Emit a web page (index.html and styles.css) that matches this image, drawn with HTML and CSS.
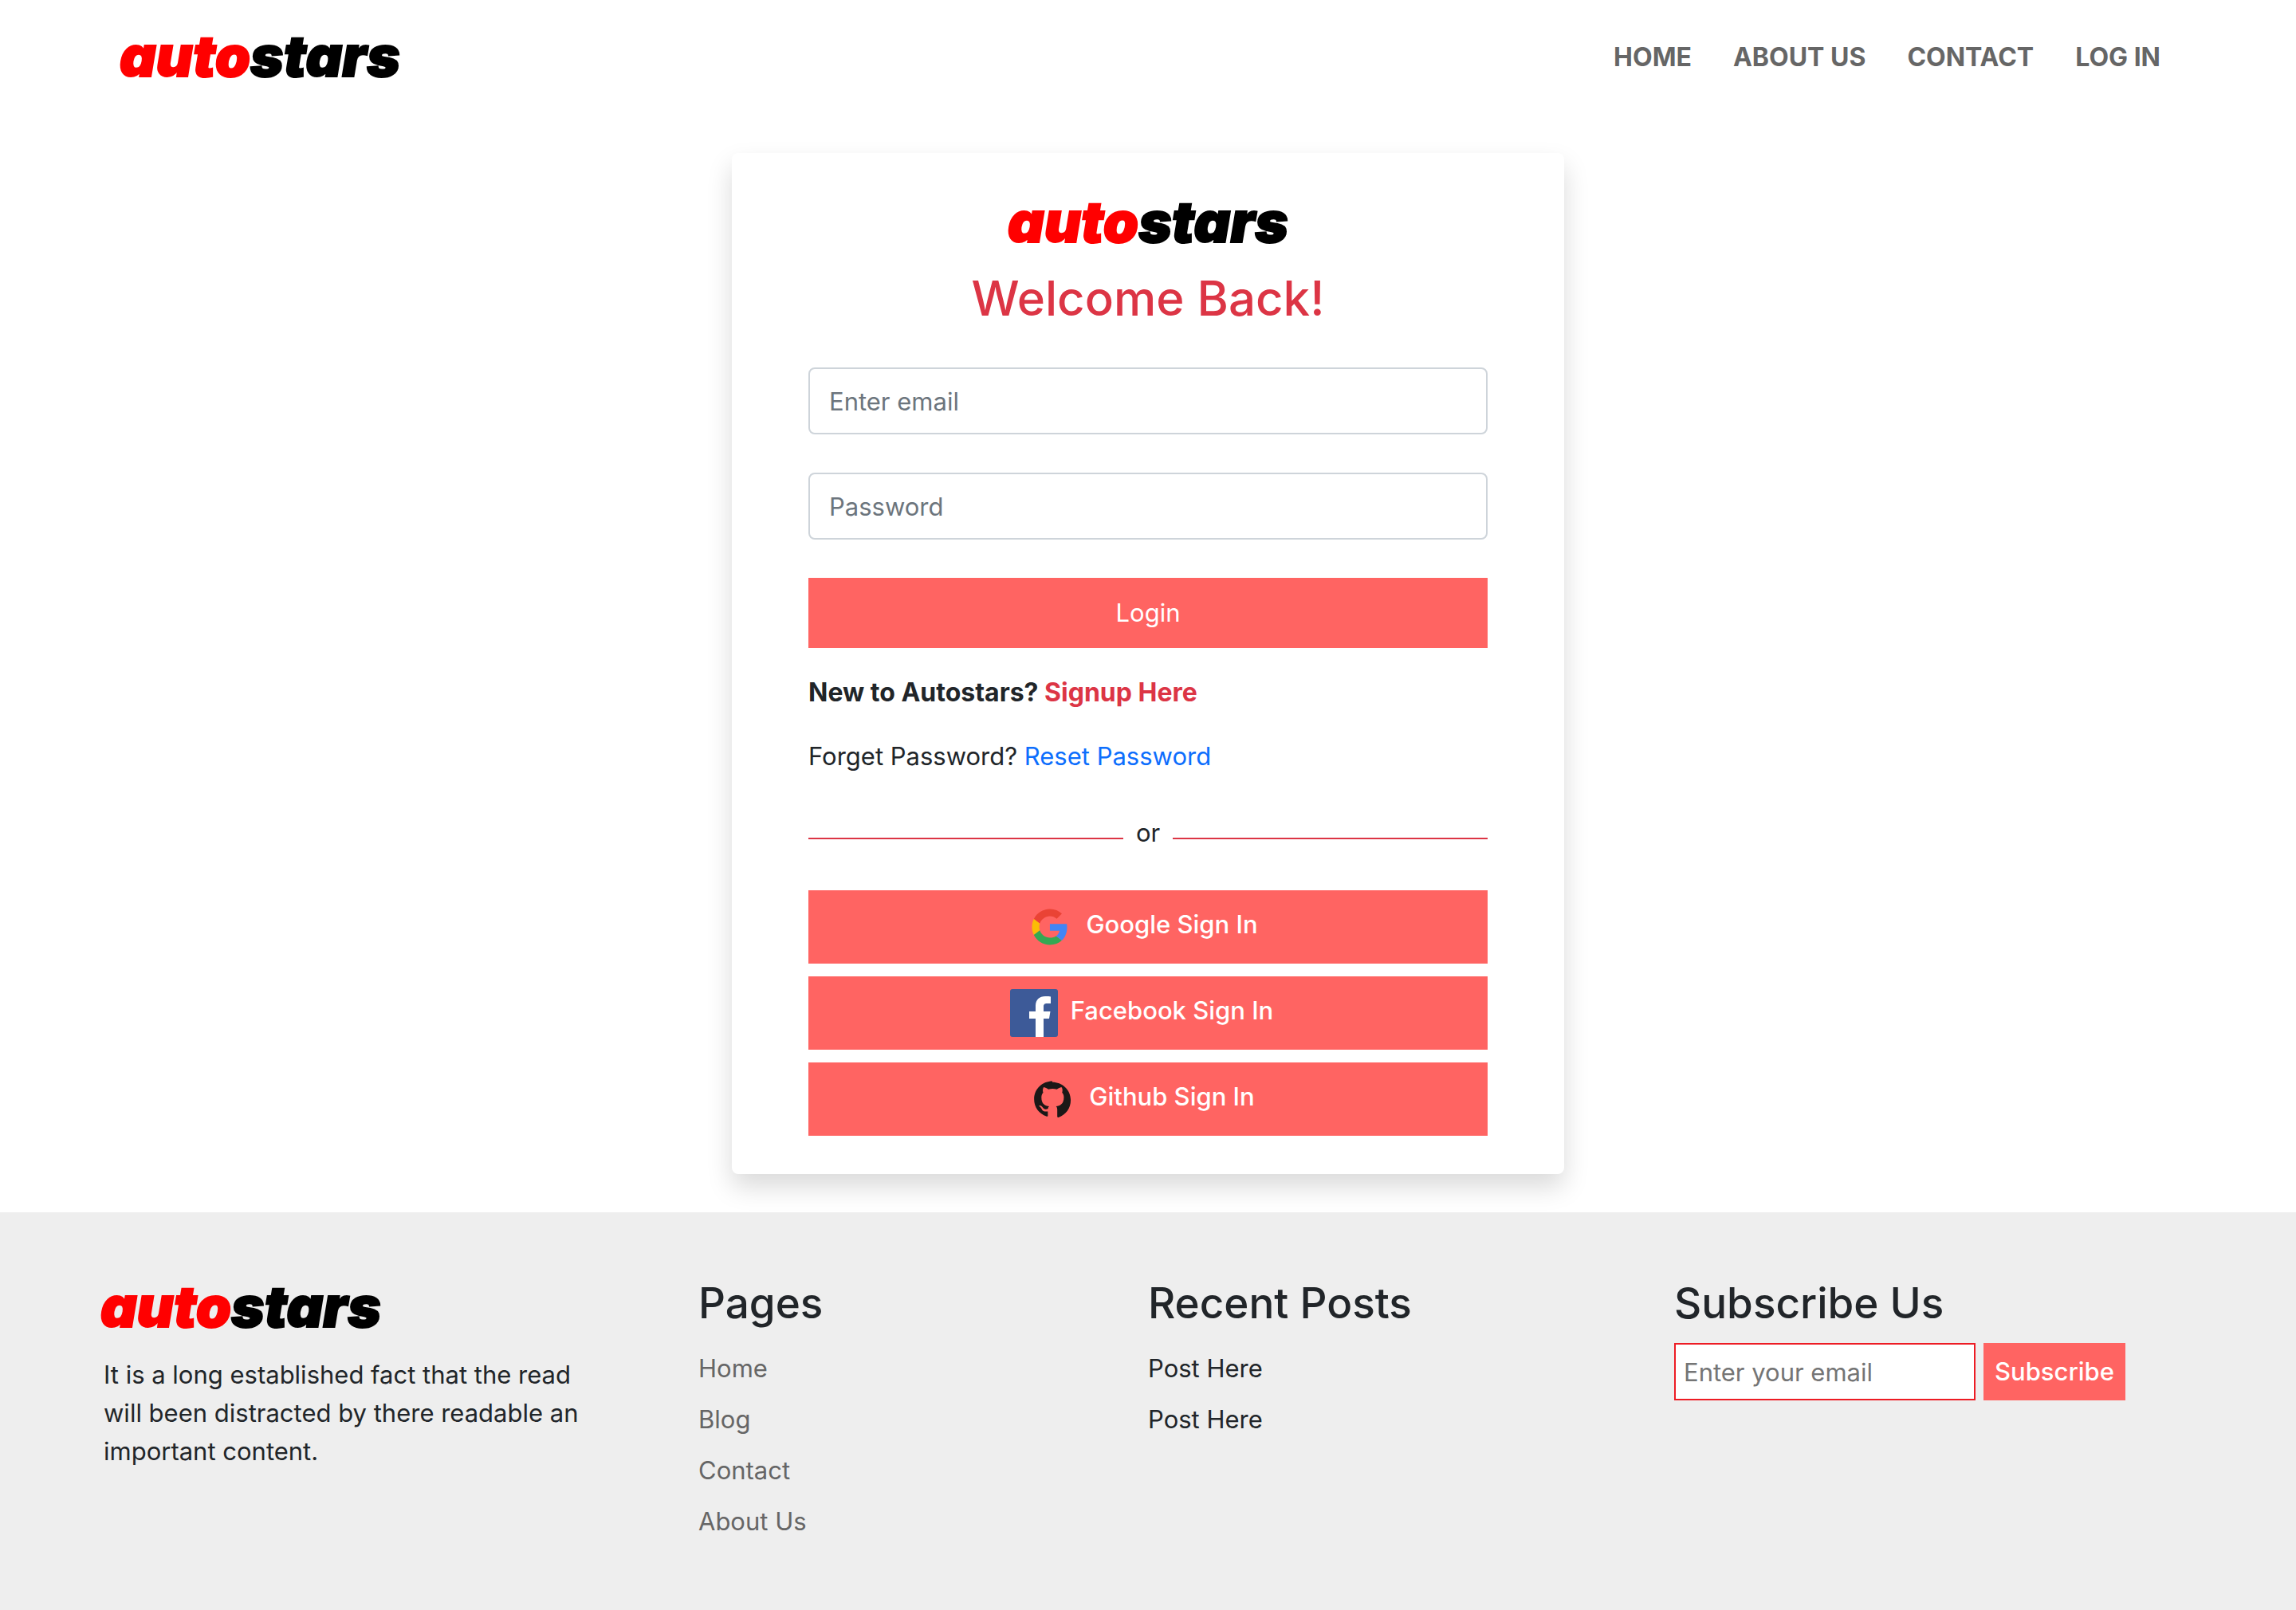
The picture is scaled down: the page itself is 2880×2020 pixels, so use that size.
FILE: index.html
```html
<!DOCTYPE html>
<html lang="en">
<head>
  <meta charset="utf-8">
  <meta name="viewport" content="width=device-width, initial-scale=1">
  <title>Autostars - Log in</title>
  <link rel="stylesheet" href="styles.css">
</head>
<body>
  <header class="site-header">
    <a class="logo" href="#"><span class="logo-auto">auto</span>stars</a>
    <nav class="site-nav">
      <a href="#">HOME</a>
      <a href="#">ABOUT US</a>
      <a href="#">CONTACT</a>
      <a href="#">LOG IN</a>
    </nav>
  </header>

  <main class="login-card">
    <div class="logo"><span class="logo-auto">auto</span>stars</div>
    <h1 class="login-title">Welcome Back!</h1>
    <form class="login-form">
      <input class="field" type="email" placeholder="Enter email" aria-label="Email">
      <input class="field" type="password" placeholder="Password" aria-label="Password">
      <button class="btn btn-login" type="submit">Login</button>
    </form>
    <p class="login-note login-note-strong">New to Autostars? <a class="link-signup" href="#">Signup Here</a></p>
    <p class="login-note">Forget Password? <a class="link-reset" href="#">Reset Password</a></p>
    <div class="divider"><span class="divider-line"></span><span>or</span><span class="divider-line"></span></div>
    <div class="social">
      <button class="btn btn-social" type="button">
        <svg class="social-icon" viewBox="-9 -8 64 64" aria-hidden="true">
          <path fill="#ea4335" d="M24 9.5c3.54 0 6.71 1.22 9.21 3.6l6.85-6.85C35.9 2.38 30.47 0 24 0 14.62 0 6.51 5.38 2.56 13.22l7.98 6.19C12.43 13.72 17.74 9.5 24 9.5z"/>
          <path fill="#4285f4" d="M46.98 24.55c0-1.57-.15-3.09-.38-4.55H24v9.02h12.94c-.58 2.96-2.26 5.48-4.78 7.18l7.73 6c4.51-4.18 7.09-10.36 7.09-17.65z"/>
          <path fill="#fbbc05" d="M10.53 28.59c-.48-1.45-.76-2.99-.76-4.59s.27-3.14.76-4.59l-7.98-6.19C.92 16.46 0 20.12 0 24c0 3.88.92 7.54 2.56 10.78l7.97-6.19z"/>
          <path fill="#34a853" d="M24 48c6.48 0 11.93-2.13 15.89-5.81l-7.73-6c-2.15 1.45-4.92 2.3-8.16 2.3-6.26 0-11.57-4.22-13.47-9.91l-7.98 6.19C6.51 42.62 14.62 48 24 48z"/>
        </svg>
        <span>Google Sign In</span>
      </button>
      <button class="btn btn-social" type="button">
        <svg class="social-icon" viewBox="0 0 60 60" aria-hidden="true">
          <rect width="60" height="60" rx="3" fill="#3d5a98"/>
          <path fill="#fff" d="M32 60V37H24V28H32V21C32 13 37 9 44 9C47 9 50 9.2 51 9.4V18H46.500C43 18 42 19.500 42 22V28H50.500L49 37H42V60Z"/>
        </svg>
        <span>Facebook Sign In</span>
      </button>
      <button class="btn btn-social" type="button">
        <svg class="social-icon" viewBox="-31 -30 160 160" aria-hidden="true">
          <path fill="#1b1817" fill-rule="evenodd" d="M48.854 -10C18 -10-12 14-12 50c0 27 16 49 42 58 3 .6 4-1 4-3V91c-17 3-20-7-20-7-3-7-7-9-7-9-5-4 .5-4 .5-4 6 .5 9 6 9 6 6 9 14 7 18 5 .5-4 2-7 4-8-14-2-26-7-26-30 0-6 2-12 6-16-1-2-3-9 .5-17 0 0 5-2 17 6 9-2 19-2 28 0 12-8 17-6 17-6 3.500 8 1.500 15 .5 17 4 4 6 10 6 16 0 23-13 28-26 30 2 2 4 5 4 11v23c0 2 1 4 4 3 25-9 41-31 41-58 0-36-30-60-61.146-60z"/>
        </svg>
        <span>Github Sign In</span>
      </button>
    </div>
  </main>

  <footer class="site-footer">
    <section class="footer-about">
      <a class="logo" href="#"><span class="logo-auto">auto</span>stars</a>
      <p>It is a long established fact that the read will been distracted by there readable an important content.</p>
    </section>
    <section>
      <h2>Pages</h2>
      <ul class="footer-list">
        <li><a href="#">Home</a></li>
        <li><a href="#">Blog</a></li>
        <li><a href="#">Contact</a></li>
        <li><a href="#">About Us</a></li>
      </ul>
    </section>
    <section>
      <h2>Recent Posts</h2>
      <ul class="footer-list">
        <li>Post Here</li>
        <li>Post Here</li>
      </ul>
    </section>
    <section>
      <h2>Subscribe Us</h2>
      <form class="subscribe">
        <input class="subscribe-field" type="email" placeholder="Enter your email" aria-label="Your email">
        <button class="btn btn-subscribe" type="submit">Subscribe</button>
      </form>
    </section>
  </footer>
</body>
</html>
```

FILE: styles.css
```css
* {
  box-sizing: border-box;
}

body {
  display: flex;
  flex-direction: column;
  min-height: 100vh;
  margin: 0;
  background: #fff;
  color: #212529;
  font-family: Inter, "Liberation Sans", sans-serif;
  font-size: 31px;
  line-height: 48px;
}

h1,
h2,
p,
ul {
  margin: 0;
}

a {
  color: inherit;
  text-decoration: none;
}

input,
button {
  font: inherit;
}

.logo {
  display: block;
  padding-bottom: 4px;
  color: #000;
  font-size: 71px;
  font-style: italic;
  font-weight: 900;
  line-height: 76px;
  white-space: nowrap;
  -webkit-text-stroke: 2px;
}

.logo-auto {
  color: #f00;
}

/* Header */
.site-header {
  display: flex;
  align-items: center;
  justify-content: space-between;
  padding: 32px 170px 32px 150px;
}

.site-nav {
  display: flex;
  gap: 52px;
  color: #666;
  font-size: 32px;
  font-weight: 700;
}

/* Login card */
.login-card {
  width: 1044px;
  max-width: 100%;
  margin: 48px auto;
  padding: 48px 96px;
  border-radius: 8px;
  background: #fff;
  box-shadow: 0 16px 32px rgba(0, 0, 0, 0.15);
}

.login-card .logo {
  text-align: center;
}

.login-title {
  margin: 16px 0 48px;
  color: #dc3545;
  font-size: 60px;
  font-weight: 500;
  line-height: 77px;
  text-align: center;
}

.login-form {
  display: grid;
  gap: 48px;
}

.field {
  width: 100%;
  height: 84px;
  padding: 0 24px;
  border: 2px solid #ced4da;
  border-radius: 8px;
  background: #fff;
  color: #212529;
}

.field::placeholder {
  color: #6c757d;
  opacity: 1;
}

.btn {
  border: 0;
  background: #ff6462;
  color: #fff;
}

.btn-login {
  height: 88px;
}

.login-note {
  margin-top: 32px;
}

.login-note-strong {
  font-size: 32px;
  font-weight: 700;
}

.link-signup {
  color: #dc3545;
}

.link-reset {
  color: #0d6efd;
}

.divider {
  display: flex;
  align-items: flex-end;
  gap: 16px;
  margin: 48px 0;
}

.divider-line {
  flex: 1;
  height: 2px;
  margin-bottom: 16px;
  background: #dc3545;
}

.social {
  display: grid;
  gap: 16px;
}

.btn-social {
  display: flex;
  align-items: center;
  justify-content: center;
  gap: 16px;
  height: 92px;
  padding: 0 16px 0 0;
  font-weight: 500;
}

.btn-social span {
  padding-bottom: 6px;
}

.social-icon {
  width: 60px;
  height: 60px;
}

/* Footer */
.site-footer {
  display: grid;
  flex: 1;
  grid-template-columns: 750fr 564fr 660fr 654fr;
  padding: 80px 126px 76px;
  background: #eee;
}

.site-footer h2 {
  margin-bottom: 16px;
  font-size: 53px;
  font-weight: 500;
  line-height: 68px;
}

.footer-about {
  max-width: 620px;
}

.footer-about .logo {
  margin-bottom: 20px;
}

.footer-about p {
  padding: 0 4px;
}

.footer-list {
  display: grid;
  gap: 16px;
  padding: 8px 0 0;
  list-style: none;
}

.footer-list a {
  color: #666;
}

.subscribe {
  display: flex;
  gap: 10px;
}

.subscribe-field {
  width: 378px;
  height: 72px;
  padding: 0 10px;
  border: 2px solid #ed1c24;
  border-radius: 0;
  background: #fff;
}

.subscribe-field::placeholder {
  color: #757575;
  opacity: 1;
}

.btn-subscribe {
  padding: 0 14px;
  font-weight: 500;
}
```
